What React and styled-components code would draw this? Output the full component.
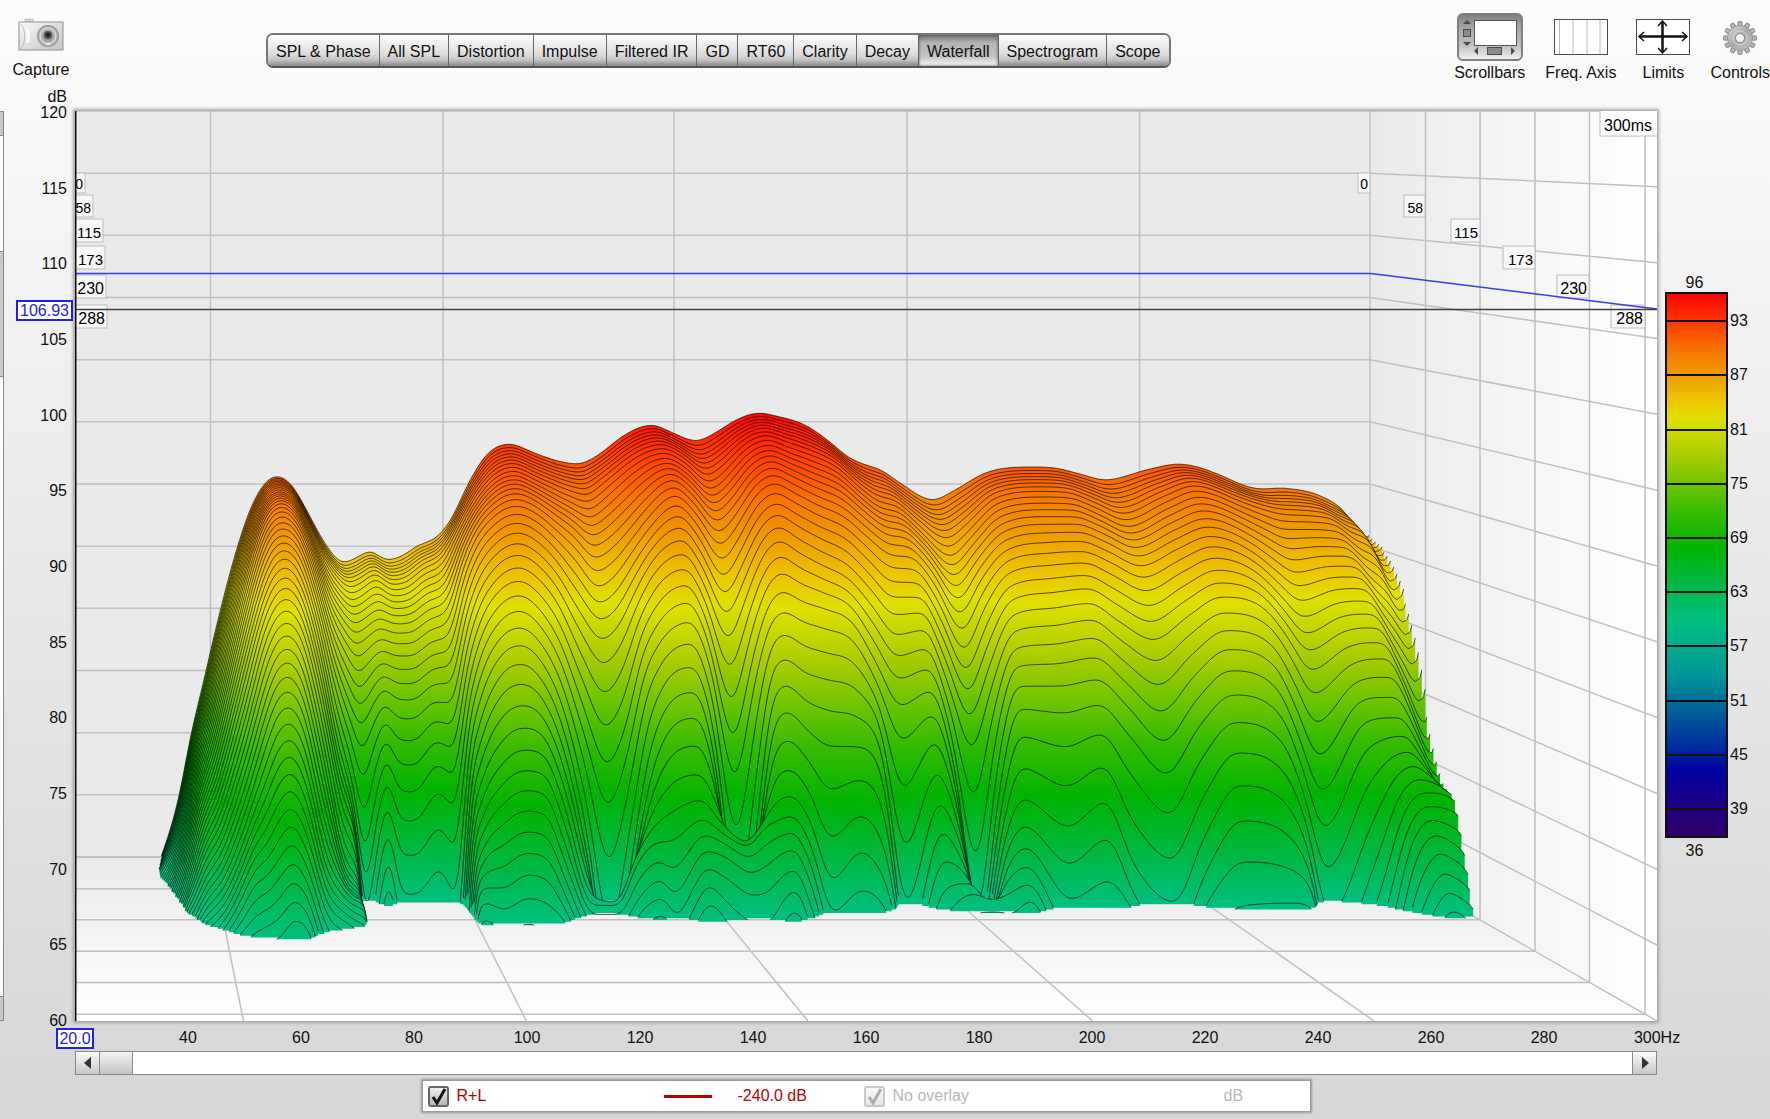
import React from "react";
import styled, { createGlobalStyle, css } from "styled-components";

const GlobalStyle = createGlobalStyle`
  * {
    box-sizing: border-box;
  }

  body {
    margin: 0;
    background: #d8d8d8;
  }
`;

const tabs = [
  "SPL & Phase",
  "All SPL",
  "Distortion",
  "Impulse",
  "Filtered IR",
  "GD",
  "RT60",
  "Clarity",
  "Decay",
  "Waterfall",
  "Spectrogram",
  "Scope",
];

const levels = [120, 115, 110, 105, 100, 95, 90, 85, 80, 75, 70, 65, 60];
const freqs = [40, 60, 80, 100, 120, 140, 160, 180, 200, 220, 240, 260, 280];

const bands = [
  { size: 3, label: "93" },
  { size: 6, label: "87" },
  { size: 6, label: "81" },
  { size: 6, label: "75" },
  { size: 6, label: "69" },
  { size: 6, label: "63" },
  { size: 6, label: "57" },
  { size: 6, label: "51" },
  { size: 6, label: "45" },
  { size: 6, label: "39" },
  { size: 3, label: "" },
];

/* ---------- waterfall geometry ---------- */

const LEFT = 75;
const TOP = 111;
const RIGHT = 1657;
const BOTTOM = 1021;
const BACK_X = 1370;
const BACK_Y = 857;
const STEP = 0.01067;

// slice numbers at which every ridge column below is sampled
const KEYS = [0, 8, 16, 20, 24, 28, 31, 34, 37, 42, 47];

// [x at slice 0, x at slice 32, [y at each key slice]]
const COLUMNS = [
  [157, 166, [868, 869, 893, 910, 925, 940]],
  [166, 180, [843, 849, 872, 885, 900, 915, 925, 940]],
  [180, 195, [793, 803, 826, 840, 856, 875, 890, 908, 925, 950]],
  [191, 208, [733, 745, 771, 789, 810, 835, 856, 880, 903, 940, 975]],
  [200, 218, [697, 712, 742, 763, 788, 817, 842, 868, 893, 930, 965]],
  [215, 233, [632, 647, 680, 703, 733, 770, 801, 832, 862, 905, 955]],
  [237, 252, [548, 564, 595, 621, 655, 700, 737, 775, 812, 868, 947]],
  [249, 263, [512, 527, 553, 578, 612, 655, 695, 737, 784, 860, 942]],
  [264, 276, [484, 497, 519, 543, 577, 620, 658, 700, 750, 838, 937]],
  [276, 288, [476, 489, 511, 535, 567, 610, 648, 691, 739, 825, 920]],
  [291, 303, [484, 498, 523, 547, 583, 627, 668, 714, 764, 850, 930]],
  [306, 322, [509, 528, 564, 597, 643, 698, 748, 800, 850, 915, 990]],
  [321, 344, [537, 566, 625, 675, 745, 805, 855, 880, 895, 935, 990]],
  [335, 366, [557, 588, 662, 732, 830, 890, 907, 912, 916, 960]],
  [342, 373, [563, 594, 674, 753, 895, 1010]],
  [356, 379, [558, 589, 664, 732, 840, 950]],
  [370, 394, [551, 579, 650, 704, 779, 879, 945]],
  [387, 404, [560, 590, 656, 718, 820, 960]],
  [402, 420, [556, 588, 656, 719, 821, 960]],
  [417, 445, [546, 574, 642, 702, 792, 940]],
  [438, 462, [536, 562, 634, 703, 808, 980]],
  [452, 470, [518, 536, 588, 645, 722, 810, 860, 895, 918, 990]],
  [466, 482, [488, 510, 552, 600, 665, 745, 803, 850, 888, 965]],
  [488, 502, [453, 481, 524, 566, 623, 697, 765, 825, 888, 990]],
  [510, 524, [444, 471, 514, 555, 611, 684, 750, 811, 875, 990]],
  [532, 545, [452, 480, 523, 567, 628, 700, 756, 815, 880, 995]],
  [545, 565, [457, 487, 538, 588, 660, 745, 805, 865, 915]],
  [562, 592, [462, 496, 562, 632, 735, 860, 895, 925]],
  [578, 618, [464, 502, 587, 664, 806, 1010, 902, 925]],
  [590, 638, [460, 492, 577, 647, 760, 880, 855, 895, 940]],
  [605, 658, [450, 478, 553, 603, 673, 775, 824, 880, 930]],
  [620, 671, [438, 466, 533, 577, 645, 738, 814, 894, 950]],
  [652, 703, [425, 453, 505, 554, 622, 718, 800, 851, 904, 1000]],
  [673, 722, [433, 463, 525, 583, 665, 780, 822, 857, 925]],
  [696, 748, [441, 482, 560, 639, 779, 975, 842, 873, 945]],
  [715, 766, [433, 468, 535, 595, 690, 830, 820, 864, 945]],
  [734, 777, [421, 450, 508, 560, 635, 735, 803, 855, 922]],
  [759, 792, [413, 440, 493, 541, 612, 712, 796, 850, 911, 1010]],
  [780, 811, [417, 447, 503, 553, 622, 730, 820, 890, 960]],
  [803, 833, [424, 455, 515, 565, 629, 746, 880, 960]],
  [830, 862, [442, 468, 528, 580, 642, 747, 852, 960]],
  [848, 888, [457, 486, 548, 607, 685, 780, 885, 960]],
  [866, 914, [465, 501, 567, 635, 740, 945]],
  [881, 950, [470, 507, 570, 630, 715, 832, 913, 960]],
  [900, 975, [483, 525, 600, 680, 790, 868, 894, 960]],
  [933, 996, [500, 547, 650, 749, 935, 930, 900, 960]],
  [955, 1012, [490, 530, 610, 690, 800, 858, 893, 960]],
  [985, 1030, [473, 504, 574, 632, 709, 826, 884, 930]],
  [1032, 1075, [467, 497, 565, 625, 713, 864, 960]],
  [1055, 1114, [468, 498, 563, 620, 705, 839, 960]],
  [1080, 1145, [474, 508, 575, 640, 735, 900]],
  [1105, 1187, [480, 520, 591, 661, 774, 935]],
  [1150, 1215, [469, 502, 572, 634, 727, 870, 950]],
  [1178, 1250, [464, 491, 558, 613, 695, 821, 940]],
  [1227, 1300, [478, 508, 578, 630, 717, 838, 930]],
  [1240, 1322, [484, 514, 596, 658, 765, 878, 930]],
  [1262, 1345, [489, 521, 617, 694, 828, 990]],
  [1281, 1395, [488, 522, 603, 664, 750, 890, 960]],
  [1292, 1420, [489, 523, 601, 659, 738, 813, 860, 925, 960]],
  [1300, 1440, [490, 525, 602, 659, 736, 793, 835, 892, 945]],
  [1323, 1452, [497, 540, 628, 687, 755, 793, 840, 898, 950]],
  [1345, 1461, [512, 550, 652, 722, 775, 796, 846, 903, 960]],
  [1363, 1466, [539, 578, 670, 745, 788, 799, 851, 908, 960]],
  [1370, 1468, [535, 565, 650, 728, 783, 803, 856, 911, 960]],
];

const COLORS = [
  [96, "#ff0000"],
  [93, "#ff3800"],
  [90, "#f87000"],
  [87, "#f09c00"],
  [84, "#ecc800"],
  [82, "#e0e000"],
  [78, "#a8cc00"],
  [75, "#70c400"],
  [72, "#38bc00"],
  [68, "#00b400"],
  [64, "#00b840"],
  [60, "#00c080"],
  [54, "#009898"],
  [51, "#007098"],
  [45, "#0020a0"],
  [43, "#0000a0"],
  [39, "#200080"],
  [36, "#300068"],
];

// monotone cubic interpolation, so that ridges never overshoot their samples
function monotone(xs, ys) {
  const n = xs.length;
  const h = [];
  const d = [];
  for (let i = 0; i < n - 1; i++) {
    h.push(xs[i + 1] - xs[i]);
    d.push((ys[i + 1] - ys[i]) / h[i]);
  }
  const m = [d[0]];
  for (let i = 1; i < n - 1; i++) {
    if (d[i - 1] * d[i] <= 0) {
      m.push(0);
    } else {
      const mean = (h[i] * d[i - 1] + h[i - 1] * d[i]) / (h[i] + h[i - 1]);
      const limit = 3 * Math.min(Math.abs(d[i - 1]), Math.abs(d[i]));
      m.push(Math.sign(mean) * Math.min(Math.abs(mean), limit));
    }
  }
  m.push(d[n - 2]);
  let i = 0;
  return (x) => {
    if (x < xs[i]) i = 0;
    while (i < n - 2 && x > xs[i + 1]) i++;
    const t = (x - xs[i]) / h[i];
    const t2 = t * t;
    const t3 = t2 * t;
    return (
      (2 * t3 - 3 * t2 + 1) * ys[i] +
      (t3 - 2 * t2 + t) * h[i] * m[i] +
      (3 * t2 - 2 * t3) * ys[i + 1] +
      (t3 - t2) * h[i] * m[i + 1]
    );
  };
}

// box filter whose window shrinks towards both ends
function smooth(values, radius) {
  return values.map((_, i) => {
    const r = Math.min(radius, i, values.length - 1 - i);
    let sum = 0;
    for (let j = i - r; j <= i + r; j++) sum += values[j];
    return sum / (2 * r + 1);
  });
}

const columnCurves = COLUMNS.map(([x0, x1, ys]) => {
  const full = KEYS.map((_, i) =>
    i < ys.length ? ys[i] : ys[ys.length - 1] + 40 * (i - ys.length + 1)
  );
  return { x0, x1, at: monotone(KEYS, full) };
});

function buildSlice(k) {
  const s = k * STEP;
  const base = BACK_Y + (BOTTOM - BACK_Y) * s;
  const span = 746 + 164 * s;
  const xs = [];
  const ys = [];
  columnCurves.forEach(({ x0, x1, at }) => {
    const x = x0 + ((x1 - x0) * k) / 32;
    const prev = xs.length ? xs[xs.length - 1] : -Infinity;
    xs.push(Math.max(x, prev + 0.5));
    ys.push(at(k));
  });
  const curve = monotone(xs, ys);
  const start = xs[0];
  const count = Math.floor((xs[xs.length - 1] - start) / 1.5) + 1;
  const raw = Array.from({ length: count }, (_, i) => curve(start + i * 1.5));
  const runs = [];
  let run = null;
  smooth(smooth(raw, 3), 3).forEach((y, i) => {
    if (y < base) {
      if (!run) {
        run = [];
        runs.push(run);
      }
      run.push([start + i * 1.5, y]);
    } else {
      run = null;
    }
  });
  const shapes = runs
    .filter((r) => r.length > 1)
    .map((r) => {
      const line = r
        .map(([x, y], i) => `${i ? "L" : "M"}${x.toFixed(1)} ${y.toFixed(1)}`)
        .join("");
      const last = r[r.length - 1][0];
      return {
        line,
        area: `${line}L${last.toFixed(1)} ${base.toFixed(1)}L${r[0][0].toFixed(1)} ${base.toFixed(1)}Z`,
      };
    });
  return { k, base, top: base - span * 0.6, shapes };
}

const slices = Array.from({ length: 48 }, (_, k) => buildSlice(k));

const backLines = Array.from({ length: 13 }, (_, i) => i);
const backX = [210.5, 443, 674, 907, 1139.5];
const floorX = [243.5, 526.5, 808, 1092.5, 1374];
const wallX = [1370, 1425.5, 1480, 1535, 1589.5, 1645];

const timeLabels = [
  { text: "0", size: 14, left: 1358, right: 1370, y: 173, h: 20, near: 85 },
  { text: "58", size: 14, left: 1404, right: 1425, y: 195, h: 22, near: 93 },
  { text: "115", size: 15, left: 1451, right: 1480, y: 219, h: 23, near: 103 },
  { text: "173", size: 15, left: 1503, right: 1535, y: 246, h: 23, near: 105 },
  { text: "230", size: 16, left: 1557, right: 1589, y: 275, h: 23, near: 106 },
  { text: "288", size: 16, left: 1611, right: 1645, y: 305, h: 23, near: 107 },
];

const TimeTag = ({ left, right, y, h, size, text }) => (
  <g>
    <rect x={left} y={y} width={right - left} height={h} fill="#f8f8f8" stroke="#bcbcbc" />
    <text x={right - 2} y={y + h - 4} fontSize={size} textAnchor="end">
      {text}
    </text>
  </g>
);

const Waterfall = () => (
  <Chart viewBox={`${LEFT} ${TOP} ${RIGHT - LEFT} ${BOTTOM - TOP}`} role="img" aria-label="Waterfall">
    <defs>
      <linearGradient id="wall" x1="0" x2="1" y1="0" y2="0">
        <stop offset="0" stopColor="#eaeaea" />
        <stop offset="1" stopColor="#ffffff" />
      </linearGradient>
      <linearGradient id="floor" x1="0" x2="0" y1="0" y2="1">
        <stop offset="0" stopColor="#eaeaea" />
        <stop offset="1" stopColor="#ffffff" />
      </linearGradient>
      {slices.map(({ k, base, top }) => (
        <linearGradient
          key={k}
          id={`slice${k}`}
          gradientUnits="userSpaceOnUse"
          x1="0"
          x2="0"
          y1={top}
          y2={base}
        >
          {COLORS.filter(([level]) => level >= 60).map(([level, color]) => (
            <stop key={level} offset={(96 - level) / 36} stopColor={color} />
          ))}
        </linearGradient>
      ))}
    </defs>

    <rect x={LEFT} y={TOP} width={BACK_X - LEFT} height={BACK_Y - TOP} fill="#eaeaea" />
    <path d={`M${BACK_X} ${TOP}H${RIGHT}V${BOTTOM}L${BACK_X} ${BACK_Y}Z`} fill="url(#wall)" />
    <path d={`M${LEFT} ${BACK_Y}H${BACK_X}L${RIGHT} ${BOTTOM}H${LEFT}Z`} fill="url(#floor)" />

    <g stroke="#c0c0c0" strokeWidth="1.5" fill="none">
      {backLines.map((i) => {
        const y = TOP + (i * (BACK_Y - TOP)) / 12;
        const front = TOP + (i * (BOTTOM - TOP)) / 12;
        return <path key={i} d={`M${LEFT} ${y}H${BACK_X}L${RIGHT} ${front}`} />;
      })}
      {backX.map((x, i) => (
        <path key={x} d={`M${x} ${TOP}V${BACK_Y}L${floorX[i]} ${BOTTOM}`} />
      ))}
      {wallX.map((x) => {
        const y = BACK_Y + ((x - BACK_X) * (BOTTOM - BACK_Y)) / (RIGHT - BACK_X);
        return <path key={x} d={`M${x} ${TOP}V${y}H${LEFT}`} />;
      })}
    </g>

    {slices.map(({ k, shapes }) =>
      shapes.map(({ area, line }, i) => (
        <g key={`${k}-${i}`}>
          <path d={area} fill={`url(#slice${k})`} />
          <path d={line} fill="none" stroke="#000" strokeOpacity="0.65" />
        </g>
      ))
    )}

    <g fontFamily="Liberation Sans, Arial, sans-serif">
      {timeLabels.map((t) => (
        <TimeTag key={t.text} {...t} />
      ))}
      {timeLabels.map((t) => (
        <TimeTag key={t.text} {...t} right={t.near} left={t.near - (t.right - t.left)} />
      ))}
      <rect x="1600" y="110" width="58" height="26" fill="#fff" stroke="#bcbcbc" />
      <text x="1628" y="131" fontSize="16" textAnchor="middle">
        300ms
      </text>
    </g>
    <path d="M75 273.5H1371L1657 309" fill="none" stroke="#3a3af0" strokeWidth="1.5" />
    <path d="M75 309.5H1657" stroke="#3c403c" strokeWidth="1.5" />
    <path d="M75.5 111V1021" stroke="#111" strokeWidth="2" />
  </Chart>
);

/* ---------- icons ---------- */

const CameraIcon = () => (
  <svg width="46" height="34" viewBox="0 0 46 34">
    <defs>
      <linearGradient id="camBody" x1="0" x2="1" y1="0" y2="1">
        <stop offset="0" stopColor="#fafafa" />
        <stop offset="1" stopColor="#c4c4c4" />
      </linearGradient>
      <radialGradient id="camLens">
        <stop offset="0.3" stopColor="#888" />
        <stop offset="0.7" stopColor="#c8c8c8" />
        <stop offset="1" stopColor="#8c8c8c" />
      </radialGradient>
    </defs>
    <path d="M7 1h3v3H7zM11 1h4v3h-4z" fill="#e0e0e0" stroke="#aaa" strokeWidth="0.6" />
    <rect x="1" y="4" width="44" height="28" fill="url(#camBody)" stroke="#909090" />
    <path d="M3 6c5 7 5 17 0 25" fill="none" stroke="#bbb" />
    <path d="M9 11v14M11 11v14" stroke="#fff" strokeWidth="1.5" />
    <circle cx="30" cy="18" r="11" fill="url(#camLens)" />
    <circle cx="30" cy="18" r="8" fill="none" stroke="#eee" strokeOpacity="0.6" />
    <circle cx="30" cy="17" r="4" fill="#555" />
    <circle cx="30" cy="17" r="2" fill="#15153c" />
    <path d="M28 26h4" stroke="#eee" strokeWidth="2" />
  </svg>
);

const ScrollbarsIcon = () => (
  <svg width="59" height="38" viewBox="0 0 59 38">
    <rect x="14.5" y="2.5" width="42" height="25" fill="#fff" stroke="#555" />
    <path d="M7 2l4 4H3zM7 28l4-4H3zM18 29v8l-4-4zM51 29v8l4-4z" fill="#4a4a4a" />
    <rect x="3.5" y="11.5" width="7" height="7" fill="#8a8a8a" stroke="#4a4a4a" />
    <rect x="27.5" y="29.5" width="14" height="7" fill="#8a8a8a" stroke="#4a4a4a" />
  </svg>
);

const FreqAxisIcon = () => (
  <svg width="54" height="36" viewBox="0 0 54 36">
    <rect x="0.5" y="0.5" width="53" height="35" fill="#fff" stroke="#4a4a4a" />
    <path d="M5.5 1v34M19 1v34M33 1v34M46 1v34" stroke="#b8b8b8" />
  </svg>
);

const LimitsIcon = () => (
  <svg width="54" height="36" viewBox="0 0 54 36">
    <rect x="0.5" y="0.5" width="53" height="35" fill="#fff" stroke="#4a4a4a" />
    <path d="M3 17.5h48M26.5 3v30" stroke="#111" strokeWidth="2.5" />
    <path
      d="M8 13l-5 4.5L8 22M46 13l5 4.5L46 22M22 7l4.5-5L31 7M22 29l4.5 5L31 29"
      fill="none"
      stroke="#111"
      strokeWidth="1.5"
    />
  </svg>
);

const GearIcon = () => (
  <svg width="34" height="34" viewBox="-17 -17 34 34">
    <defs>
      <linearGradient id="gear" x1="0" x2="1" y1="0" y2="1">
        <stop offset="0" stopColor="#d8d8d8" />
        <stop offset="0.5" stopColor="#aaaaaa" />
        <stop offset="1" stopColor="#c4c4c4" />
      </linearGradient>
    </defs>
    {Array.from({ length: 12 }, (_, i) => (
      <rect
        key={i}
        x="-2.2"
        y="-16.5"
        width="4.4"
        height="6"
        rx="1"
        fill="#b4b4b4"
        stroke="#808080"
        strokeWidth="0.8"
        transform={`rotate(${i * 30})`}
      />
    ))}
    <circle r="12.5" fill="url(#gear)" stroke="#8c8c8c" strokeWidth="0.8" />
    <circle r="7" fill="none" stroke="#d8d8d8" />
    <circle r="4.5" fill="#f6f6f6" stroke="#888" />
  </svg>
);

const CheckBox = ({ id, disabled }) => (
  <CheckWrap $faded={disabled}>
    <CheckInput id={id} type="checkbox" defaultChecked disabled={disabled} />
    <CheckMark viewBox="0 0 22 22" width="22" height="22">
      <path d="M5 11l4 6L17 3" />
    </CheckMark>
  </CheckWrap>
);

const App = () => (
  <Page>
    <GlobalStyle />
    <Header>
      <Tool $wide>
        <CameraIcon />
        Capture
      </Tool>
      <Tabs>
        {tabs.map((name) => (
          <Tab key={name} $active={name === "Waterfall"}>
            {name}
          </Tab>
        ))}
      </Tabs>
      <Tools>
        <Tool $gap={3}>
          <Pressed>
            <ScrollbarsIcon />
          </Pressed>
          Scrollbars
        </Tool>
        <Tool>
          <FreqAxisIcon />
          Freq. Axis
        </Tool>
        <Tool>
          <LimitsIcon />
          Limits
        </Tool>
        <Tool>
          <GearIcon />
          Controls
        </Tool>
      </Tools>
    </Header>

    <Body>
      <SideScroll>
        <SideCap />
        <SideTrack $grow={116} />
        <SideThumb />
        <SideTrack $grow={622} />
        <SideCap />
      </SideScroll>
      <LevelAxis>
        <Unit>dB</Unit>
        {levels.map((db) => (
          <LevelTick key={db}>{db}</LevelTick>
        ))}
        <LevelCursor>106.93</LevelCursor>
      </LevelAxis>
      <Frame>
        <Waterfall />
      </Frame>
      <Scale>
        <ScaleEnd>96</ScaleEnd>
        <ScaleBar>
          {bands.map(({ size, label }) => (
            <Band key={size + label} $size={size}>
              {label && <BandLabel>{label}</BandLabel>}
            </Band>
          ))}
        </ScaleBar>
        <ScaleEnd>36</ScaleEnd>
      </Scale>

      <Below>
        <FreqAxis>
          <FreqTick>
            <FreqCursor>20.0</FreqCursor>
          </FreqTick>
          {freqs.map((hz) => (
            <FreqTick key={hz}>{hz}</FreqTick>
          ))}
          <FreqTick>300Hz</FreqTick>
        </FreqAxis>
        <ScrollBar>
          <ScrollButton aria-label="Scroll left">
            <svg width="8" height="12" viewBox="0 0 8 12">
              <path d="M7 0v12L0 6z" fill="#333" />
            </svg>
          </ScrollButton>
          <ScrollThumb />
          <ScrollTrack />
          <ScrollButton aria-label="Scroll right">
            <svg width="8" height="12" viewBox="0 0 8 12">
              <path d="M1 0v12l7-6z" fill="#333" />
            </svg>
          </ScrollButton>
        </ScrollBar>
        <Legend>
          <LegendPart $width={236}>
            <CheckBox id="trace" />
            <label htmlFor="trace">R+L</label>
          </LegendPart>
          <TraceLine />
          <LegendPart $width={126}>-240.0 dB</LegendPart>
          <LegendPart $width={360} $faded>
            <CheckBox id="overlay" disabled />
            <label htmlFor="overlay">No overlay</label>
          </LegendPart>
          <LegendPart $faded>dB</LegendPart>
        </Legend>
      </Below>
    </Body>
  </Page>
);

export default App;

const Page = styled.div`
  min-height: 100vh;
  overflow: hidden;
  background: linear-gradient(#fcfcfc, #d6d6d6);
  color: #111;
  font-family: "Liberation Sans", Arial, sans-serif;
  font-size: 16px;
  line-height: 18px;
`;

const Header = styled.header`
  display: flex;
  align-items: flex-start;
  height: 111px;
`;

const Tool = styled.button`
  display: flex;
  flex-direction: column;
  align-items: center;
  justify-content: flex-end;
  gap: ${(props) => props.$gap || 9}px;
  width: ${(props) => (props.$wide ? "82px" : "auto")};
  height: ${(props) => (props.$wide ? 79 : 82)}px;
  padding: 0;
  border: 0;
  background: none;
  color: inherit;
  font: inherit;
`;

const Tools = styled.div`
  display: flex;
  gap: 20px;
  margin-left: auto;
`;

const Pressed = styled.span`
  display: flex;
  align-items: center;
  justify-content: center;
  width: 66px;
  height: 48px;
  border: 2px solid #808080;
  border-radius: 6px;
  background: linear-gradient(#808080, #a8a8a8 30%, #c0c0c0 70%, #f0f0f0);
`;

const Tabs = styled.nav`
  display: flex;
  height: 35px;
  margin: 33px 0 0 184px;
  border: 2px solid #777;
  border-bottom-color: #555;
  border-radius: 7px;
  overflow: hidden;
`;

const Tab = styled.button`
  padding: 2px 8px 0;
  border: 0;
  border-right: 1px solid #666;
  background: linear-gradient(#fcfcfc, #dedede 60%, #c4c4c4 80%, #888);
  color: #111;
  font: inherit;
  white-space: nowrap;

  &:last-child {
    border-right: 0;
  }

  ${(props) =>
    props.$active &&
    css`
      background: linear-gradient(#707070, #b4b4b4 25%, #c4c4c4 70%, #f8f8f8);
      box-shadow: inset 0 0 3px #555;
    `}
`;

const Body = styled.main`
  display: grid;
  grid-template-columns: 4px 71px minmax(0, 1fr) 113px;
`;

const SideScroll = styled.div`
  display: flex;
  flex-direction: column;
  border: solid #888;
  border-width: 1px 1px 1px 0;
`;

const SideCap = styled.div`
  height: 23px;
  background: #c8c8c8;
`;

const SideTrack = styled.div`
  flex: ${(props) => props.$grow} 0 0;
  border: solid #888;
  border-width: 1px 0;
  background: #fff;
`;

const SideThumb = styled.div`
  flex: 124 0 0;
  background: #c8c8c8;
`;

const LevelAxis = styled.div`
  position: relative;
  display: flex;
  flex-direction: column;
  justify-content: space-between;
  padding: 2px 8px 0 0;
  text-align: right;
`;

const LevelTick = styled.div`
  display: flex;
  align-items: center;
  justify-content: flex-end;
  height: 0;
`;

const Unit = styled.div`
  position: absolute;
  top: -23px;
  right: 8px;
`;

const cursor = css`
  border: 2px solid #2020f0;
  background: #fff;
  color: #2020f0;
  text-align: center;
`;

const LevelCursor = styled.div`
  ${cursor}
  position: absolute;
  top: calc(21% - 2px);
  right: 2px;
  width: 57px;
  line-height: 17px;
`;

const Frame = styled.div`
  box-shadow: 0 0 3px 2px #a4a4a4;
`;

const Chart = styled.svg`
  display: block;
  width: 100%;
  height: auto;
`;

const Scale = styled.div`
  display: flex;
  flex-direction: column;
  justify-content: center;
  padding: 0 42px 2px 8px;
`;

const ScaleEnd = styled.div`
  padding: 4px 6px 0 2px;
  text-align: center;
`;

const ScaleBar = styled.div`
  display: flex;
  flex-direction: column;
  height: 546px;
  border: 2px solid #111;
  background: linear-gradient(
    ${COLORS.map(([level, color]) => `${color} ${Math.round(((96 - level) / 60) * 100)}%`).join(", ")}
  );
`;

const Band = styled.div`
  display: flex;
  align-items: flex-end;
  flex: ${(props) => props.$size} 0 0;
  border-bottom: 2px solid #111;

  &:last-child {
    border-bottom: 0;
  }
`;

const BandLabel = styled.span`
  height: 8px;
  margin-left: 63px;
`;

const Below = styled.div`
  grid-column: 3;
  display: flex;
  flex-direction: column;
`;

const FreqAxis = styled.div`
  display: flex;
  justify-content: space-between;
  padding-top: 6px;
  height: 30px;
`;

const FreqTick = styled.div`
  display: flex;
  align-items: center;
  justify-content: center;
  width: 0;
  height: 22px;
`;

const FreqCursor = styled.span`
  ${cursor}
  flex: none;
  width: 38px;
  line-height: 17px;
`;

const ScrollBar = styled.div`
  display: flex;
  height: 24px;
  border: 1px solid #888;
  background: #fff;
`;

const ScrollButton = styled.button`
  display: flex;
  align-items: center;
  justify-content: center;
  width: 23px;
  padding: 0;
  border: 0;
  background: linear-gradient(#fafafa, #c8c8c8);
`;

const ScrollThumb = styled.div`
  width: 34px;
  border: solid #888;
  border-width: 0 1px;
  background: linear-gradient(#f4f4f4, #c4c4c4);
`;

const ScrollTrack = styled.div`
  flex: 1;
  border-right: 1px solid #888;
`;

const Legend = styled.div`
  display: flex;
  align-items: center;
  align-self: center;
  width: 887px;
  max-width: 100%;
  height: 30px;
  margin: 6px 0;
  padding-left: 5px;
  background: #fff;
  box-shadow: 0 0 2px 2px #989898;
`;

const LegendPart = styled.div`
  display: flex;
  align-items: center;
  justify-content: flex-start;
  gap: 8px;
  width: ${(props) => (props.$width ? `${props.$width}px` : "auto")};
  color: ${(props) => (props.$faded ? "#b8b8b8" : "#b80000")};
`;

const TraceLine = styled.div`
  width: 48px;
  height: 3px;
  margin-right: 26px;
  background: #b80000;
`;

const CheckWrap = styled.span`
  position: relative;
  display: flex;
  opacity: ${(props) => (props.$faded ? 0.35 : 1)};
`;

const CheckInput = styled.input`
  appearance: none;
  width: 21px;
  height: 21px;
  margin: 0;
  border: 2px solid #666;
  border-radius: 3px;
  background: linear-gradient(#f0f0f0, #b8b8b8);
`;

const CheckMark = styled.svg`
  position: absolute;
  top: 0;
  left: 0;
  pointer-events: none;

  path {
    fill: none;
    stroke: #111;
    stroke-width: 3;
  }
`;
